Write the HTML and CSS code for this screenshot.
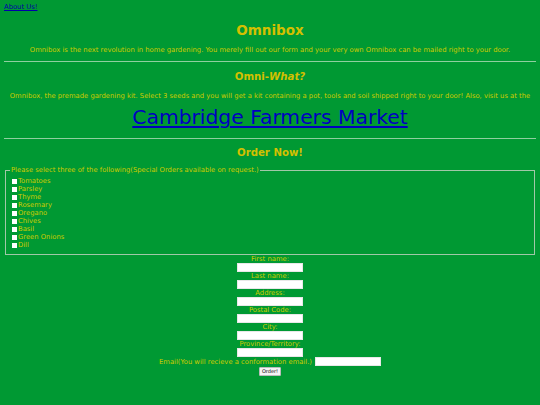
FILE: index.html
```html
<!DOCTYPE html>
<html>
<head>
<meta charset="utf-8">
<link rel="stylesheet" href="styles.css">
</head>
<body>
<a class="about" href="#">About Us!</a>
<h1 class="title">Omnibox</h1>
<p class="text">Omnibox is the next revolution in home gardening. You merely fill out our form and your very own Omnibox can be mailed right to your door.</p>
<hr class="rule">
<h2 class="title">Omni-<em>What?</em></h2>
<p class="text">Omnibox, the premade gardening kit. Select 3 seeds and you will get a kit containing a pot, tools and soil shipped right to your door! Also, visit us at the</p>
<p class="market"><a href="#">Cambridge Farmers Market</a></p>
<hr class="rule rule-low">
<h2 class="title order">Order Now!</h2>
<form class="form">
  <fieldset class="seeds">
    <legend class="legend">Please select three of the following(Special Orders available on request.)</legend>
    <label class="seed"><span class="box"></span>Tomatoes</label>
    <label class="seed"><span class="box"></span>Parsley</label>
    <label class="seed"><span class="box"></span>Thyme</label>
    <label class="seed"><span class="box"></span>Rosemary</label>
    <label class="seed"><span class="box"></span>Oregano</label>
    <label class="seed"><span class="box"></span>Chives</label>
    <label class="seed"><span class="box"></span>Basil</label>
    <label class="seed"><span class="box"></span>Green Onions</label>
    <label class="seed"><span class="box"></span>Dill</label>
  </fieldset>
  <div class="fields">
    <label class="lbl">First name:</label>
    <span class="input"></span>
    <label class="lbl">Last name:</label>
    <span class="input"></span>
    <label class="lbl">Address:</label>
    <span class="input"></span>
    <label class="lbl">Postal Code:</label>
    <span class="input"></span>
    <label class="lbl">City:</label>
    <span class="input"></span>
    <label class="lbl">Province/Territory:</label>
    <span class="input"></span>
    <div class="email-row"><label class="lbl">Email(You will recieve a conformation email.)</label><span class="input"></span></div>
    <span class="button">Order!</span>
  </div>
</form>
</body>
</html>
```
FILE: styles.css
```css
html, body {
  background: #009933;
}
body {
  margin: 0;
  padding: 3px 4px;
  font-family: "DejaVu Sans", Verdana, sans-serif;
  font-size: 6.8px;
  color: #cccc00;
}
.about {
  display: block;
  font-size: 6.8px;
  color: #0000aa;
  height: 10px;
}
.title {
  margin: 0;
  text-align: center;
  font-weight: bold;
  color: #d4c000;
}
h1.title {
  font-size: 13.5px;
  margin-top: 9px;
  line-height: 16px;
}
h2.title {
  font-size: 10.2px;
  margin-top: 8px;
  line-height: 14px;
}
.text {
  margin: 8px 0 0;
  text-align: center;
  line-height: 9px;
}
.rule {
  border: 0;
  border-top: 1px solid #8fcf9f;
  margin: 6px 0 0;
  height: 0;
}
.rule-low {
  margin-top: 9px;
}
.market {
  margin: 4px 0 0;
  text-align: center;
  font-size: 20.3px;
  line-height: 24px;
}
.market a {
  color: #0000c0;
}
h2.order {
  margin-top: 7px;
}
.form {
  margin-top: 6px;
}
.seeds {
  margin: 0 1px;
  padding: 0 6px 5px;
  border: 1px solid #a0c8a8;
  display: flex;
  flex-direction: column;
}
.legend {
  padding: 0 1px;
  margin-left: -2px;
  line-height: 8px;
  margin-bottom: 3px;
}
.seed {
  display: flex;
  align-items: center;
  gap: 1px;
  line-height: 8px;
  height: 8px;
}
.box {
  width: 5px;
  height: 5px;
  background: #fff;
}
.fields {
  display: flex;
  flex-direction: column;
  align-items: center;
  margin-top: 0;
}
.lbl {
  line-height: 8px;
  height: 8px;
}
.input {
  display: block;
  width: 64px;
  height: 7px;
  background: #fff;
  border: 1px solid #e8e8e8;
}
.email-row {
  display: flex;
  align-items: center;
  gap: 3px;
}
.button {
  display: block;
  margin-top: 1px;
  background: #f4f4f4;
  border: 1px solid #bbb;
  border-radius: 1px;
  color: #000;
  font-size: 5px;
  line-height: 7px;
  padding: 0 2px;
}
```
